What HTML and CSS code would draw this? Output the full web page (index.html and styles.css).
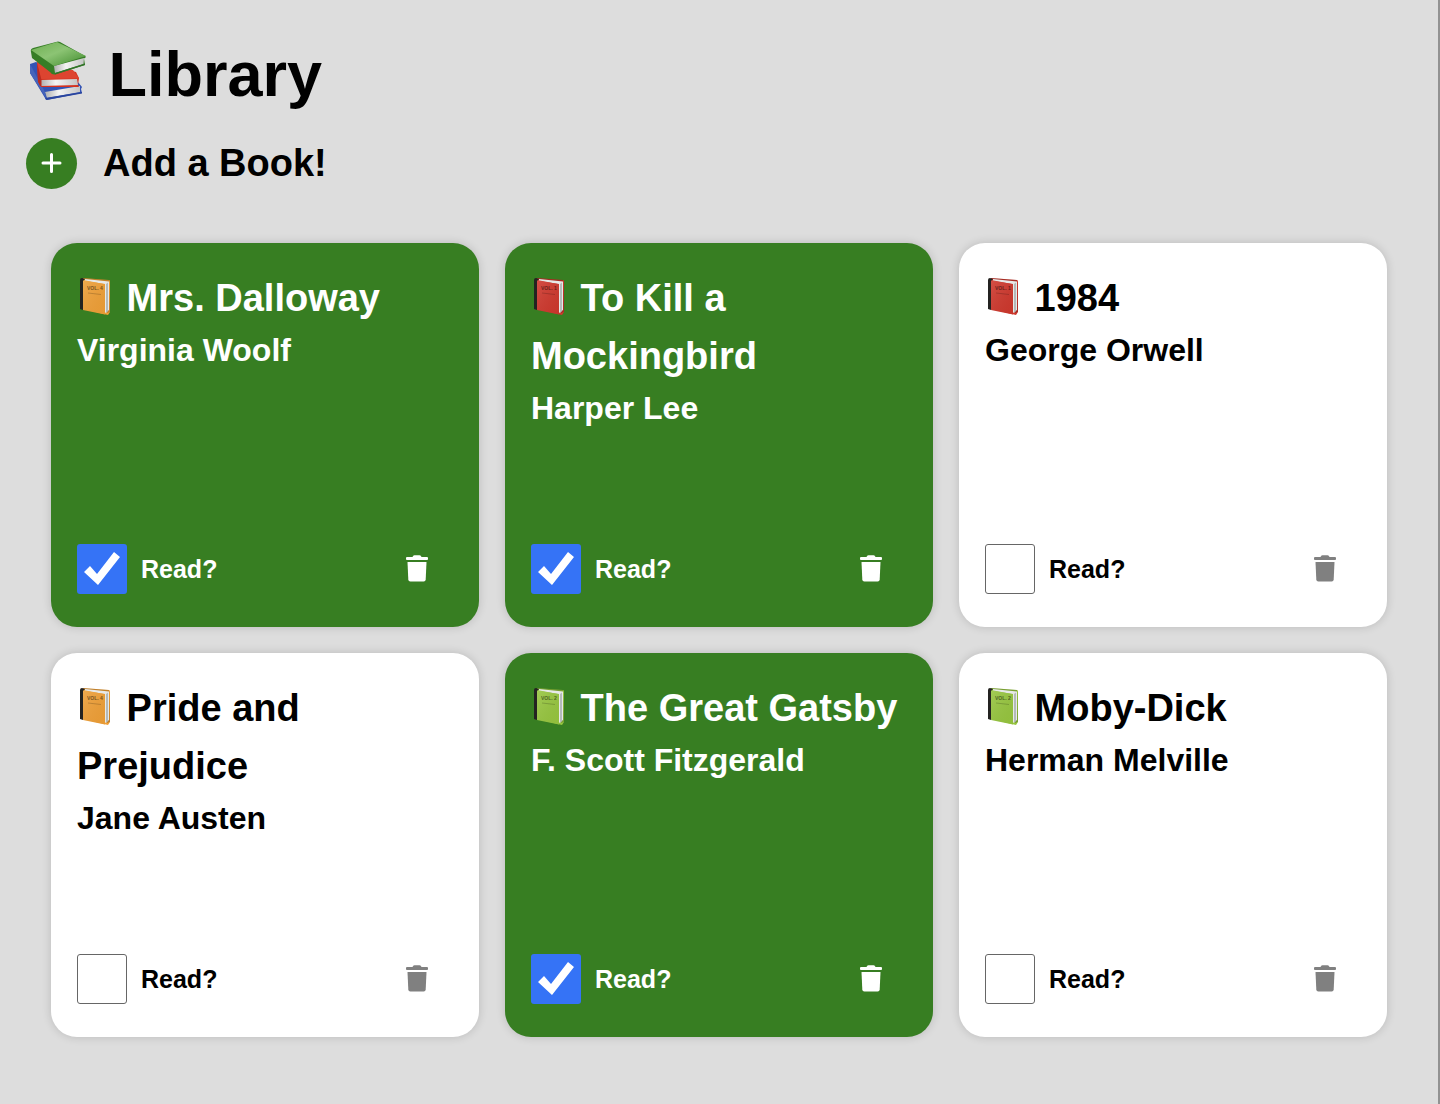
FILE: index.html
```html
<!DOCTYPE html>
<html lang="en">
<head>
<meta charset="utf-8">
<meta name="viewport" content="width=device-width, initial-scale=1">
<title>Library</title>
<link rel="stylesheet" href="styles.css">
</head>
<body>
<svg class="sprite" aria-hidden="true">
  <defs>
    <linearGradient id="green-cover" x1="0" y1="0" x2="1" y2="1">
      <stop offset="0" stop-color="#6dae50"/><stop offset=".45" stop-color="#8cc474"/><stop offset="1" stop-color="#3f8a2c"/>
    </linearGradient>
    <linearGradient id="paper" x1="0" y1="0" x2="1" y2="0">
      <stop offset="0" stop-color="#b0b0b0"/><stop offset=".4" stop-color="#f4f4f4"/><stop offset="1" stop-color="#c4c4c4"/>
    </linearGradient>
    <linearGradient id="shade" x1="0" y1="0" x2="1" y2="1">
      <stop offset="0" stop-color="#fff" stop-opacity=".12"/><stop offset="1" stop-color="#000" stop-opacity=".04"/>
    </linearGradient>
    <symbol id="book" viewBox="0 0 36 42">
      <path d="M6 3 32 5Q33 5 33 7V37L31 40 6 34Z" fill="currentColor"/>
      <path d="M6 3 32 5 33 37 30 38V9L8 6Z" fill="#000" opacity=".2"/>
      <path d="M8 4 32 6.500V35L28 38V9L8 6Z" fill="#e7e9e8"/>
      <path d="M29 9 31 7.500V36L29 38Z" fill="#b4baba"/>
      <path d="M6 5 27 9Q28 9 28 10V39.500L6 35Z" fill="currentColor"/>
      <path d="M6 5 27 9Q28 9 28 10V39.500L6 35Z" fill="url(#shade)"/>
      <path d="M3 5Q3 3 5 3L8 4 6 6V35L3 34Z" fill="#242321"/>
      <path d="M11 18 24 19.500" stroke="#000" stroke-width=".6" opacity=".3"/>
    </symbol>
    <symbol id="trash" viewBox="0 0 22 27">
      <path d="M1 2H6Q7 2 7 1.200 7.300.2 8.500.2H13.500Q14.700.2 15 1.200 15 2 16 2H21Q22 2 22 3V4.200Q22 5 21 5H1Q0 5 0 4.200V3Q0 2 1 2Z"/>
      <path d="M1.500 7H20.500L19.700 24.500Q19.600 26.500 17.700 26.500H4.300Q2.400 26.500 2.300 24.500Z"/>
    </symbol>
  </defs>
</svg>

<header class="header">
  <h1 class="site-title">
    <svg class="stack-icon" viewBox="0 0 62 64" aria-hidden="true">
      <path d="M4 24 10 22 52 42 56 47 55 49 56 53 21 60 19 58 4 33Z" fill="#3353b4"/>
      <path d="M19 52 54 46 54 52 21 58Z" fill="url(#paper)"/>
      <path d="M4 24 19 52 20 58 4 33Z" fill="#4664ba"/>
      <path d="M19 58 56 52V53.500L20 60Z" fill="#2a459e"/>
      <path d="M11 22 50 32 53 38 52 45 53 47 15 47 12 42Z" fill="#d4321f"/>
      <path d="M11 23 15 39 53 38.500 47 30 27 26Z" fill="#dd4430"/>
      <path d="M15 40 51 39 52 45 15 46Z" fill="url(#paper)"/>
      <path d="M11 23 15.500 40V46H14L12 41Z" fill="#b92b20"/>
      <path d="M5 12Q4 9 7 8L30 2Q32 1 34 2L59 16Q61 17 58 18.500L59 25 29 34.500Q26 35 24 32L6 18Z" fill="#367d26"/>
      <path d="M28 26 58 18 57.500 24 29 33Z" fill="url(#paper)"/>
      <path d="M5 10 31 2 60 16 28 26Z" fill="url(#green-cover)"/>
      <path d="M29 33 59 23.500V25L29 34.500Z" fill="#32742a"/>
    </svg>
    Library
  </h1>
  <div class="add-row">
    <button class="add-button" id="add-book" type="button" aria-labelledby="add-title">
      <svg class="plus-icon" viewBox="0 0 21 21" aria-hidden="true"><path d="M10.500 1.500V18.500M2 10H19"/></svg>
    </button>
    <h2 class="add-title" id="add-title">Add a Book!</h2>
  </div>
</header>

<main class="books">
  <article class="card card-read">
    <h3 class="book-title"><svg class="book-icon orange" viewBox="0 0 36 42" aria-hidden="true"><use href="#book"/><text class="volume" x="10" y="15">VOL. 4</text></svg> Mrs. Dalloway</h3>
    <p class="author">Virginia Woolf</p>
    <div class="card-actions">
      <label class="read"><input class="read-box" type="checkbox" checked> Read?</label>
      <button class="delete" type="button" aria-label="Delete"><svg class="trash-icon" aria-hidden="true"><use href="#trash"/></svg></button>
    </div>
  </article>
  <article class="card card-read">
    <h3 class="book-title"><svg class="book-icon red" viewBox="0 0 36 42" aria-hidden="true"><use href="#book"/><text class="volume" x="10" y="15">VOL. 1</text></svg> To Kill a Mockingbird</h3>
    <p class="author">Harper Lee</p>
    <div class="card-actions">
      <label class="read"><input class="read-box" type="checkbox" checked> Read?</label>
      <button class="delete" type="button" aria-label="Delete"><svg class="trash-icon" aria-hidden="true"><use href="#trash"/></svg></button>
    </div>
  </article>
  <article class="card">
    <h3 class="book-title"><svg class="book-icon red" viewBox="0 0 36 42" aria-hidden="true"><use href="#book"/><text class="volume" x="10" y="15">VOL. 1</text></svg> 1984</h3>
    <p class="author">George Orwell</p>
    <div class="card-actions">
      <label class="read"><input class="read-box" type="checkbox"> Read?</label>
      <button class="delete" type="button" aria-label="Delete"><svg class="trash-icon" aria-hidden="true"><use href="#trash"/></svg></button>
    </div>
  </article>
  <article class="card">
    <h3 class="book-title"><svg class="book-icon orange" viewBox="0 0 36 42" aria-hidden="true"><use href="#book"/><text class="volume" x="10" y="15">VOL. 4</text></svg> Pride and Prejudice</h3>
    <p class="author">Jane Austen</p>
    <div class="card-actions">
      <label class="read"><input class="read-box" type="checkbox"> Read?</label>
      <button class="delete" type="button" aria-label="Delete"><svg class="trash-icon" aria-hidden="true"><use href="#trash"/></svg></button>
    </div>
  </article>
  <article class="card card-read">
    <h3 class="book-title"><svg class="book-icon green" viewBox="0 0 36 42" aria-hidden="true"><use href="#book"/><text class="volume" x="10" y="15">VOL. 2</text></svg> The Great Gatsby</h3>
    <p class="author">F. Scott Fitzgerald</p>
    <div class="card-actions">
      <label class="read"><input class="read-box" type="checkbox" checked> Read?</label>
      <button class="delete" type="button" aria-label="Delete"><svg class="trash-icon" aria-hidden="true"><use href="#trash"/></svg></button>
    </div>
  </article>
  <article class="card">
    <h3 class="book-title"><svg class="book-icon green" viewBox="0 0 36 42" aria-hidden="true"><use href="#book"/><text class="volume" x="10" y="15">VOL. 2</text></svg> Moby-Dick</h3>
    <p class="author">Herman Melville</p>
    <div class="card-actions">
      <label class="read"><input class="read-box" type="checkbox"> Read?</label>
      <button class="delete" type="button" aria-label="Delete"><svg class="trash-icon" aria-hidden="true"><use href="#trash"/></svg></button>
    </div>
  </article>
</main>
</body>
</html>
```
FILE: styles.css
```css
* {
  box-sizing: border-box;
  margin: 0;
}

body {
  min-height: 100vh;
  padding: 26px;
  border-right: 2px solid #929292;
  background: #ddd;
  color: #000;
  font-family: "Liberation Sans", Arial, sans-serif;
  font-weight: 700;
}

button {
  border: 0;
  cursor: pointer;
}

.sprite {
  display: block;
  width: 0;
  height: 0;
}

.site-title {
  font-size: 63px;
  line-height: 96px;
}

.stack-icon {
  width: 62px;
  height: 64px;
  margin-right: 3px;
  vertical-align: -8px;
}

.add-row {
  display: flex;
  align-items: center;
  gap: 26px;
  margin-top: 16px;
}

.add-button {
  display: grid;
  place-items: center;
  width: 51px;
  height: 51px;
  padding: 0;
  border-radius: 50%;
  background: #377e22;
}

.plus-icon {
  width: 21px;
  height: 21px;
  stroke: #fff;
  stroke-width: 3;
  stroke-linecap: round;
}

.add-title {
  font-size: 38px;
  line-height: 51px;
}

.books {
  display: grid;
  grid-template-columns: repeat(auto-fit, minmax(384px, 1fr));
  gap: 26px;
  margin-top: 54px;
  padding: 0 25px;
}

.card {
  display: flex;
  flex-direction: column;
  min-height: 384px;
  padding: 26px;
  border-radius: 26px;
  background: #fff;
  box-shadow: 0 0 10px rgba(0, 0, 0, 0.16);
}

.card-read {
  background: #377e22;
  color: #fff;
}

.book-title {
  font-size: 38px;
  line-height: 58px;
}

.book-icon {
  width: 36px;
  height: 42px;
  margin-right: 3px;
  vertical-align: -6px;
}

.orange {
  color: #f0a037;
}

.red {
  color: #cf382d;
}

.green {
  color: #97c63f;
}

.volume {
  fill: #000;
  font-size: 5px;
  opacity: 0.5;
}

.author {
  font-size: 32px;
  line-height: 46px;
}

.card-actions {
  display: flex;
  align-items: center;
  justify-content: space-between;
  margin-top: auto;
}

.read {
  display: flex;
  align-items: center;
  gap: 14px;
  font-size: 25px;
}

.read-box {
  appearance: none;
  width: 50px;
  height: 50px;
  border: 1px solid #666;
  border-radius: 3px;
  background: #fff;
}

.read-box:checked {
  border: 0;
  background: #3573f6;
}

.read-box:checked::before {
  display: block;
  width: 50px;
  height: 50px;
  background: #fff;
  clip-path: polygon(7px 28px, 13px 22px, 20px 30px, 37px 8px, 43px 13px, 21px 41px);
  content: "";
}

.delete {
  display: grid;
  place-items: center;
  width: 72px;
  height: 64px;
  padding: 0 0 2px;
  background: none;
  color: #808080;
}

.card-read .delete {
  color: #fff;
}

.trash-icon {
  width: 22px;
  height: 27px;
  fill: currentColor;
}
```
